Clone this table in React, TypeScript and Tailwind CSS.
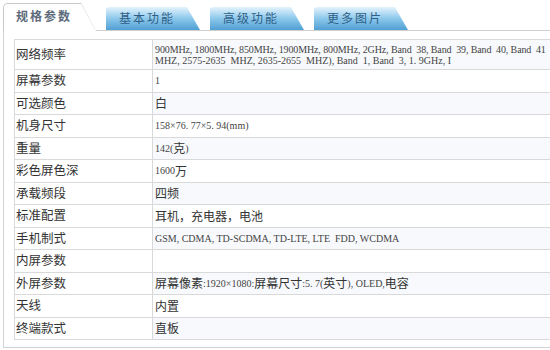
import type { ReactNode } from "react";

const lat = "font-['Liberation_Serif'] text-[10px] text-[#444]";

const Lat = ({ children }: { children: ReactNode }) => (
  <span className={lat}>{children}</span>
);

const rows: { label: string; value: ReactNode }[] = [
  {
    label: "网络频率",
    value: (
      <div className={`${lat} leading-[11px] whitespace-nowrap`}>
        <div className="tracking-[-0.12px]">900MHz, 1800MHz, 850MHz, 1900MHz, 800MHz, 2GHz, Band&nbsp; 38, Band&nbsp; 39, Band&nbsp; 40, Band&nbsp; 41</div>
        <div>MHZ, 2575-2635&nbsp; MHZ, 2635-2655&nbsp; MHZ), Band&nbsp; 1, Band&nbsp; 3, 1. 9GHz, I</div>
      </div>
    ),
  },
  { label: "屏幕参数", value: <Lat>1</Lat> },
  { label: "可选颜色", value: "白" },
  { label: "机身尺寸", value: <Lat>158×76. 77×5. 94(mm)</Lat> },
  {
    label: "重量",
    value: (
      <>
        <Lat>142(</Lat>克<Lat>)</Lat>
      </>
    ),
  },
  {
    label: "彩色屏色深",
    value: (
      <>
        <Lat>1600</Lat>万
      </>
    ),
  },
  { label: "承载频段", value: "四频" },
  { label: "标准配置", value: "耳机，充电器，电池" },
  { label: "手机制式", value: <Lat>GSM, CDMA, TD-SCDMA, TD-LTE, LTE&nbsp; FDD, WCDMA</Lat> },
  { label: "内屏参数", value: "" },
  {
    label: "外屏参数",
    value: (
      <>
        屏幕像素<Lat>:1920×1080:</Lat>屏幕尺寸<Lat>:5. 7(</Lat>英寸<Lat>), OLED, </Lat>电容
      </>
    ),
  },
  { label: "天线", value: "内置" },
  { label: "终端款式", value: "直板" },
];

const tabs = ["基本功能", "高级功能", "更多图片"];

export default function App() {
  return (
    <div className="w-[550px] h-[350px] overflow-hidden bg-white font-['Noto_Sans_CJK_SC',sans-serif]">
      {/* tab strip */}
      <div className="flex items-end h-[31px] pt-[3px] pl-[3px]">
        <div className="w-[93px] h-[28px] bg-[#c9c9c9] rounded-tl-[5px] pl-px pt-px [clip-path:polygon(0_0,84%_0,100%_100%,0_100%)]">
          <div className="h-full bg-white rounded-tl-[4px] pl-[12px] pt-[3px] text-[12px] tracking-[2px] text-[#5d6b7b] font-bold [clip-path:polygon(0_0,84%_0,100%_100%,0_100%)]">
            规格参数
          </div>
        </div>
        <div className="flex-1 flex items-end gap-[10px] pl-[10px] border-b border-[#cfcfcf] h-[28px]">
          {tabs.map((t) => (
            <div
              key={t}
              className="w-[94px] h-[23px] rounded-tl-[3px] bg-gradient-to-b from-[#e4f3fc] via-[#8cc8ec] to-[#4f9fd4] pl-[13px] pt-[2px] text-[12px] tracking-[2px] text-[#2f5f86] [clip-path:polygon(0_0,86%_0,100%_100%,0_100%)]"
            >
              {t}
            </div>
          ))}
        </div>
      </div>

      {/* panel */}
      <div className="ml-[3px] h-[317px] border-l border-b border-[#d2d2d2] pl-[10px] pt-[8px]">
        <div className="w-[600px] border-t border-l border-[#d9d9d9]">
          {rows.map((r, i) => (
            <div
              key={r.label}
              className={`grid grid-cols-[138px_1fr] border-b border-[#d9d9d9] ${i === 0 ? "h-[30px]" : "h-[22.5px]"}`}
            >
              <div className="flex items-center pl-[1px] text-[12.5px] text-[#333] border-r border-[#d9d9d9] bg-white">
                {r.label}
              </div>
              <div
                className={`flex items-center pl-[2px] text-[12px] text-[#333] whitespace-nowrap overflow-hidden ${i % 2 === 0 ? "bg-[#f7f9fc]" : "bg-white"}`}
              >
                {r.value}
              </div>
            </div>
          ))}
        </div>
      </div>
    </div>
  );
}
